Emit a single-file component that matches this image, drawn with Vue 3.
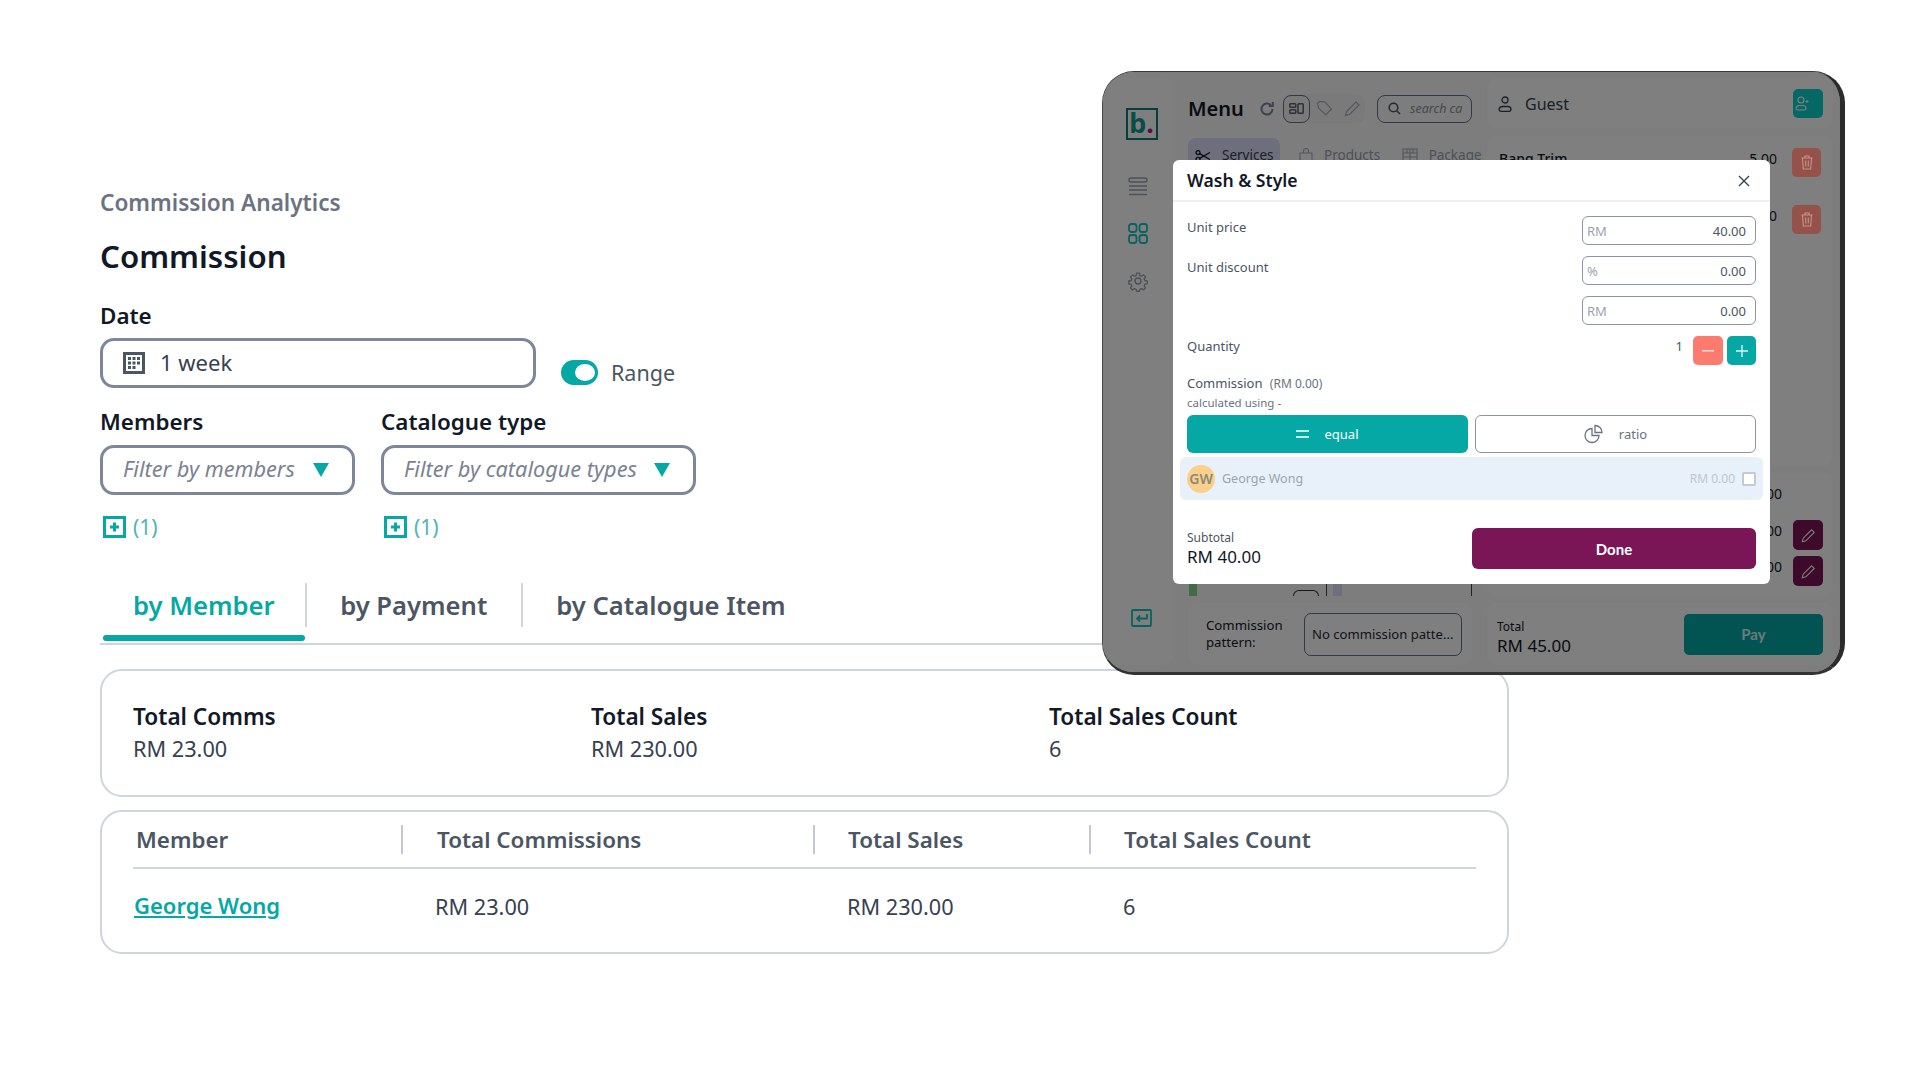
<script setup>
const summary = [
  { label: "Total Comms", value: "RM 23.00" },
  { label: "Total Sales", value: "RM 230.00" },
  { label: "Total Sales Count", value: "6" },
];
const columns = ["Member", "Total Commissions", "Total Sales", "Total Sales Count"];
const tabs = ["by Member", "by Payment", "by Catalogue Item"];
const priceFields = [
  { label: "Unit price", unit: "RM", value: "40.00" },
  { label: "Unit discount", unit: "%", value: "0.00" },
  { label: "", unit: "RM", value: "0.00" },
];
</script>

<template>
  <div class="page">
    <section class="analytics">
      <p class="crumb">Commission Analytics</p>
      <h1 class="title">Commission</h1>

      <label class="field-label date-label">Date</label>
      <div class="date-row">
        <div class="box date-box">
          <svg class="cal" width="22" height="22" viewBox="0 0 22 22">
            <rect x="1.5" y="1.5" width="19" height="19" fill="none" stroke="#4b5563" stroke-width="3" />
            <g fill="#4b5563">
              <rect x="5" y="5" width="3" height="3" /><rect x="9.5" y="5" width="3" height="3" /><rect x="14" y="5" width="3" height="3" />
              <rect x="5" y="9.5" width="3" height="3" /><rect x="9.5" y="9.5" width="3" height="3" /><rect x="14" y="9.5" width="3" height="3" />
              <rect x="5" y="14" width="3" height="3" /><rect x="9.5" y="14" width="3" height="3" />
            </g>
          </svg>
          <span>1 week</span>
        </div>
        <div class="range">
          <span class="toggle"><i></i></span>
          <span>Range</span>
        </div>
      </div>

      <div class="filters">
        <div class="filter members">
          <label class="field-label">Members</label>
          <div class="box select">
            <em>Filter by members</em>
            <span class="caret"></span>
          </div>
          <div class="count">
            <svg width="23" height="22" viewBox="0 0 23 22">
              <rect x="1.5" y="1.5" width="20" height="19" fill="none" stroke="#05a8a4" stroke-width="3" />
              <path d="M11.5 6.5v9M7 11h9" stroke="#05a8a4" stroke-width="3" />
            </svg>
            <span>(1)</span>
          </div>
        </div>
        <div class="filter catalogue">
          <label class="field-label">Catalogue type</label>
          <div class="box select">
            <em>Filter by catalogue types</em>
            <span class="caret"></span>
          </div>
          <div class="count">
            <svg width="23" height="22" viewBox="0 0 23 22">
              <rect x="1.5" y="1.5" width="20" height="19" fill="none" stroke="#05a8a4" stroke-width="3" />
              <path d="M11.5 6.5v9M7 11h9" stroke="#05a8a4" stroke-width="3" />
            </svg>
            <span>(1)</span>
          </div>
        </div>
      </div>

      <nav class="tabs">
        <a v-for="(tab, i) in tabs" :key="tab" class="tab" :class="{ active: i === 0 }">{{ tab }}</a>
      </nav>

      <div class="card summary">
        <div v-for="item in summary" :key="item.label" class="stat">
          <strong>{{ item.label }}</strong>
          <span>{{ item.value }}</span>
        </div>
      </div>

      <div class="card table-card">
        <div class="thead">
          <div v-for="col in columns" :key="col" class="th">{{ col }}</div>
        </div>
        <div class="tbody">
          <a class="member-link">George Wong</a>
          <div>RM 23.00</div>
          <div>RM 230.00</div>
          <div>6</div>
        </div>
      </div>
    </section>

    <!-- tablet window floating over the page -->
    <div class="tablet">
      <div class="app">
        <aside class="rail">
          <div class="logo">b<span>.</span></div>
          <svg class="rail-icon first" width="20" height="20" viewBox="0 0 20 20" fill="none" stroke="#9aa3b0" stroke-width="1.5">
            <rect x="1" y="1" width="18" height="4" rx="2" />
            <path d="M1 9h18M1 13h18M1 17.5h18" />
          </svg>
          <svg class="rail-icon" width="20" height="21" viewBox="0 0 20 21" fill="none" stroke="#12c4ba" stroke-width="1.8">
            <rect x="1" y="1" width="7.5" height="8" rx="2.5" /><rect x="11.5" y="1" width="7.5" height="8" rx="2.5" />
            <rect x="1" y="12" width="7.5" height="8" rx="2.5" /><rect x="11.5" y="12" width="7.5" height="8" rx="2.5" />
          </svg>
          <svg class="rail-icon" width="22" height="22" viewBox="0 0 24 24" fill="none" stroke="#9aa3b0" stroke-width="1.6" stroke-linejoin="round">
            <circle cx="12" cy="12" r="3.2" />
            <path d="M10.3 2.5h3.4l.6 2.9 1.9.8 2.5-1.6 2.4 2.4-1.6 2.5.8 1.9 2.9.6v3.4l-2.9.6-.8 1.9 1.6 2.5-2.4 2.4-2.5-1.6-1.9.8-.6 2.4h-3.4l-.6-2.4-1.9-.8-2.5 1.6-2.4-2.4 1.6-2.5-.8-1.9-2.9-.6v-3.4l2.9-.6.8-1.9-1.6-2.5 2.4-2.4 2.5 1.6 1.9-.8z" transform="translate(1.2 1.2) scale(.9)" />
          </svg>
          <svg class="rail-exit" width="21" height="18" viewBox="0 0 21 18" fill="none" stroke="#12c4ba" stroke-width="1.8">
            <rect x="1" y="1" width="19" height="16" rx="1" />
            <path d="M16 5v4.5H6M9 6.5l-3 3 3 3" />
          </svg>
        </aside>

        <main class="catalog">
          <div class="catalog-main">
            <div class="menu-head">
              <span class="menu-title">Menu</span>
              <svg class="refresh" width="16" height="16" viewBox="0 0 16 16" fill="none" stroke="#7a8494" stroke-width="2">
                <path d="M13.5 8a5.5 5.5 0 1 1-1.6-3.9" />
                <path d="M13.8 1v4h-4" fill="none" />
              </svg>
              <div class="tools">
                <span class="tool active">
                  <svg width="15" height="11" viewBox="0 0 15 11" fill="none" stroke="#5a6372" stroke-width="1.5">
                    <rect x=".8" y=".8" width="6" height="3.5" rx=".8" />
                    <rect x=".8" y="6.7" width="6" height="3.5" rx=".8" />
                    <rect x="9" y=".8" width="5.2" height="9.4" rx=".8" />
                  </svg>
                </span>
                <svg class="tool-tag" width="17" height="17" viewBox="0 0 17 17" fill="none" stroke="#a4abb8" stroke-width="1.2">
                  <path d="M1.5 3.2 3.2 1.5l5.5.4 6.8 7-5.6 6.1-7.4-7z" />
                </svg>
                <svg class="tool-pen" width="17" height="17" viewBox="0 0 17 17" fill="none" stroke="#a4abb8" stroke-width="1.2">
                  <path d="M1.5 15.5l1-4L12 2l3 3-9.5 9.5z" />
                </svg>
              </div>
              <div class="search">
                <svg width="13" height="13" viewBox="0 0 13 13" fill="none" stroke="#4b5563" stroke-width="1.6">
                  <circle cx="5.5" cy="5.5" r="4.3" /><path d="M8.7 8.7 12 12" />
                </svg>
                <em>search ca</em>
              </div>
            </div>
            <div class="cat-tabs">
              <span class="cat-tab on">
                <svg width="16" height="12" viewBox="0 0 16 12" fill="none" stroke="#111827" stroke-width="1.3">
                  <circle cx="3" cy="2.6" r="2" /><circle cx="3" cy="9.4" r="2" />
                  <path d="M4.6 3.6 15 9.5M4.6 8.4 15 2.5" />
                </svg>
                Services
              </span>
              <span class="cat-tab">
                <svg width="14" height="16" viewBox="0 0 14 16" fill="none" stroke="#a4abb8" stroke-width="1.1">
                  <path d="M1 5h12v10.5H1zM4.5 5V3a2.5 2.5 0 0 1 5 0v2" />
                </svg>
                Products
              </span>
              <span class="cat-tab">
                <svg width="16" height="16" viewBox="0 0 16 16" fill="none" stroke="#a4abb8" stroke-width="1.1">
                  <rect x="1" y="1" width="14" height="14" /><path d="M1 5h14M1 9h14M8 1v14M5 1v4M11 1v4" />
                </svg>
                Package
              </span>
            </div>
            <div class="stubs">
              <i class="stub-green"></i>
              <i class="stub-bump"></i>
              <i class="stub-line"></i>
              <i class="stub-block"></i>
              <i class="stub-end"></i>
            </div>
          </div>
          <div class="pattern panel">
            <span class="pattern-label">Commission pattern:</span>
            <span class="pattern-box">No commission patte...</span>
          </div>
        </main>

        <div class="cart">
          <div class="panel guest">
            <svg width="14" height="16" viewBox="0 0 14 16" fill="none" stroke="#374151" stroke-width="1.3">
              <circle cx="7" cy="4" r="3" /><path d="M1 13.5a3.5 3.5 0 0 1 3-3h6a3 3 0 0 1 3 3c0 1-1 1.8-2 1.8H3c-1 0-2-.8-2-1.8z" />
            </svg>
            <span>Guest</span>
            <span class="guest-btn">
              <svg width="14" height="15" viewBox="0 0 14 15" fill="none" stroke="#fff" stroke-width="1.1">
                <circle cx="6" cy="4" r="3" /><path d="M1 12.5a3.5 3.5 0 0 1 3-3h4a3 3 0 0 1 3 3c0 .9-1 1.5-2 1.5H3c-1 0-2-.6-2-1.5zM10.5 5.5h3M12 4v3" />
              </svg>
            </span>
          </div>
          <div class="panel items">
            <div class="item first">
              <span>Bang Trim</span><b>5.00</b>
              <span class="trash">
                <svg width="12" height="15" viewBox="0 0 12 15" fill="none" stroke="#c9928a" stroke-width="1.1">
                  <path d="M.5 3h11M4 3V1h4v2M1.5 3l.8 11h7.4l.8-11M4.7 5.5v6M7.3 5.5v6" />
                </svg>
              </span>
            </div>
            <div class="item">
              <span>Wash</span><b>40.00</b>
              <span class="trash">
                <svg width="12" height="15" viewBox="0 0 12 15" fill="none" stroke="#c9928a" stroke-width="1.1">
                  <path d="M.5 3h11M4 3V1h4v2M1.5 3l.8 11h7.4l.8-11M4.7 5.5v6M7.3 5.5v6" />
                </svg>
              </span>
            </div>
          </div>
          <div class="panel lines">
            <div class="line top">45.00</div>
            <div class="line">
              <span>40.00</span>
              <span class="edit">
                <svg width="15" height="15" viewBox="0 0 17 17" fill="none" stroke="#fff" stroke-width="1.2"><path d="M1.5 15.5l1-4L12 2l3 3-9.5 9.5z" /></svg>
              </span>
            </div>
            <div class="line">
              <span>5.00</span>
              <span class="edit">
                <svg width="15" height="15" viewBox="0 0 17 17" fill="none" stroke="#fff" stroke-width="1.2"><path d="M1.5 15.5l1-4L12 2l3 3-9.5 9.5z" /></svg>
              </span>
            </div>
          </div>
          <div class="panel total">
            <div class="total-text">
              <small>Total</small>
              <span>RM 45.00</span>
            </div>
            <span class="pay">Pay</span>
          </div>
        </div>
      </div>

      <div class="scrim"></div>

      <div class="modal">
        <header class="modal-head">
          <span>Wash &amp; Style</span>
          <svg width="12" height="12" viewBox="0 0 12 12" stroke="#374151" stroke-width="1.4"><path d="M1 1l10 10M11 1 1 11" /></svg>
        </header>
        <div class="modal-body">
          <div class="prices">
            <div v-for="(f, i) in priceFields" :key="i" class="price-row">
              <span>{{ f.label }}</span>
              <div class="money"><i>{{ f.unit }}</i><b>{{ f.value }}</b></div>
            </div>
          </div>
          <div class="qty-row">
            <span>Quantity</span>
            <div class="qty">
              <b>1</b>
              <span class="qty-btn minus"><svg width="12" height="2"><rect width="12" height="1.5" fill="#ffd9d4" /></svg></span>
              <span class="qty-btn plus"><svg width="12" height="12"><path d="M6 0v12M0 6h12" stroke="#d6f5f4" stroke-width="1.4" /></svg></span>
            </div>
          </div>
          <div class="comm-head">Commission <small>(RM 0.00)</small></div>
          <div class="calc">calculated using -</div>
          <div class="modes">
            <div class="mode equal">
              <svg width="13" height="8"><path d="M0 1h13M0 7h13" stroke="#fff" stroke-width="1.4" /></svg>
              <span>equal</span>
            </div>
            <div class="mode ratio">
              <svg width="20" height="20" viewBox="0 0 20 20" fill="none" stroke="#6b7280" stroke-width="1.3">
                <path d="M8 4.5a7 7 0 1 0 7 7H8z" />
                <path d="M11 1.5a7 7 0 0 1 7 7h-7z" />
              </svg>
              <span>ratio</span>
            </div>
          </div>
          <div class="assignee">
            <span class="avatar">GW</span>
            <span class="who">George Wong</span>
            <span class="amount">RM 0.00</span>
            <span class="check"></span>
          </div>
          <div class="modal-foot">
            <div class="sub">
              <small>Subtotal</small>
              <span>RM 40.00</span>
            </div>
            <div class="done">Done</div>
          </div>
        </div>
      </div>
    </div>
  </div>
</template>

<style>
html,
body {
  margin: 0;
  background: #fff;
}
</style>

<style scoped>
* {
  box-sizing: border-box;
}
.page {
  position: relative;
  width: 1920px;
  height: 1080px;
  overflow: hidden;
  background: #fff;
  font-family: "Noto Sans", "Open Sans", sans-serif;
  color: #111827;
}
.analytics {
  width: 1409px;
  margin-left: 100px;
  padding-top: 188px;
}
.crumb {
  margin: 0;
  font-size: 22.6px;
  line-height: 30px;
  font-weight: 600;
  color: #6b7280;
}
.title {
  margin: 18px 0 0;
  font-size: 31.2px;
  line-height: 40px;
  font-weight: 600;
}
.field-label {
  display: block;
  font-size: 22.4px;
  line-height: 28px;
  font-weight: 600;
}
.date-label {
  margin-top: 26px;
}
.date-row {
  display: flex;
  align-items: flex-end;
  gap: 25px;
  margin-top: 8px;
}
.box {
  display: flex;
  align-items: center;
  height: 50px;
  border: 3px solid #7d8799;
  border-radius: 14px;
  background: #fff;
}
.date-box {
  width: 436px;
  padding-left: 20px;
  padding-bottom: 2px;
  font-size: 22px;
  color: #374151;
}
.cal {
  margin-right: 15px;
  margin-top: 2px;
}
.range {
  display: flex;
  align-items: center;
  gap: 13px;
  height: 25px;
  margin-bottom: 3px;
  font-size: 21.5px;
  color: #4b5563;
}
.toggle {
  display: block;
  width: 37px;
  height: 25px;
  padding: 4px 3px 4px 14px;
  border-radius: 13px;
  background: #05a8a4;
}
.toggle i {
  display: block;
  width: 20px;
  height: 17px;
  border-radius: 50%;
  background: #fff;
}
.filters {
  display: flex;
  gap: 26px;
  margin-top: 20px;
}
.select {
  position: relative;
  height: 50px;
  margin-top: 9px;
  padding-left: 20px;
  padding-bottom: 3px;
  font-size: 21.7px;
  color: #7b8290;
}
.members .select {
  width: 255px;
}
.catalogue .select {
  width: 315px;
}
.select em {
  white-space: nowrap;
}
.caret {
  position: absolute;
  right: 23px;
  top: 15px;
  width: 0;
  height: 0;
  border-left: 8px solid transparent;
  border-right: 8px solid transparent;
  border-top: 14px solid #05a8a4;
}
.count {
  display: flex;
  align-items: center;
  gap: 7px;
  height: 24px;
  margin-top: 20px;
  padding-left: 3px;
  font-size: 21px;
  color: #4eb5b2;
}
.tabs {
  display: flex;
  align-items: flex-start;
  height: 62px;
  margin-top: 44px;
  padding-left: 3px;
  border-bottom: 2px solid #d1d5db;
}
.tab {
  position: relative;
  height: 44px;
  padding: 0 33.5px;
  border-left: 2px solid #d1d5db;
  font-size: 25.6px;
  line-height: 46px;
  font-weight: 600;
  color: #4b5563;
}
.tab.active {
  padding: 0 30px;
  border-left: 0;
  color: #05a8a4;
}
.tab.active::after {
  content: "";
  position: absolute;
  left: 0;
  right: 0;
  top: 52px;
  height: 6px;
  border-radius: 3px;
  background: #05a8a4;
}
.card {
  border: 2.5px solid #cfd4de;
  border-radius: 22px;
  background: #fff;
}
.summary {
  display: grid;
  grid-template-columns: 458px 458px 1fr;
  height: 128px;
  margin-top: 24px;
  padding: 29px 31px 0;
}
.stat strong {
  display: block;
  font-size: 22.6px;
  line-height: 33px;
  font-weight: 600;
}
.stat span {
  display: block;
  font-size: 21.7px;
  line-height: 31px;
  color: #374151;
}
.table-card {
  height: 144px;
  margin-top: 13px;
  padding: 0 31px;
}
.thead,
.tbody {
  display: grid;
  grid-template-columns: 268px 412px 276px 1fr;
}
.thead {
  height: 57px;
  padding-top: 13px;
  border-bottom: 2px solid #cfd4de;
}
.th {
  height: 29px;
  padding-left: 33px;
  border-left: 2px solid #c2c7d0;
  font-size: 22.4px;
  line-height: 29px;
  font-weight: 600;
  color: #4b5563;
}
.th:first-child {
  padding-left: 3px;
  border-left: 0;
}
.th:nth-child(2) {
  padding-left: 34px;
}
.tbody {
  padding-top: 22px;
  font-size: 21.7px;
  line-height: 32px;
  color: #374151;
}
.tbody > div {
  padding-left: 34px;
}
.member-link {
  margin-top: -2px;
  padding-left: 1px;
  font-size: 22px;
  font-weight: 600;
  color: #05a8a4;
  text-decoration: underline;
}

/* tablet window */
.tablet {
  position: absolute;
  left: 1102px;
  top: 71px;
  width: 743px;
  height: 604px;
  overflow: hidden;
  border-style: solid;
  border-color: #3a3a3a #2b2b2b #333 #4a4a4a;
  border-width: 1px 5px 3px 1px;
  border-radius: 32px;
  background: #fafafa;
}
.app {
  display: flex;
  gap: 15px;
  height: 100%;
  padding: 6px 7px 7px 7px;
  font-size: 14px;
  color: #111827;
}
.rail {
  display: flex;
  flex-direction: column;
  align-items: center;
  flex: 0 0 63px;
  padding: 29px 0 38px;
  border-radius: 10px;
  background: #fff;
}
.logo {
  width: 32px;
  height: 32px;
  margin-top: 1px;
  border: 2px solid #0f7d76;
  font-size: 27px;
  line-height: 26px;
  font-weight: 700;
  text-align: center;
  color: #0f9a92;
}
.logo span {
  color: #b01c7c;
}
.rail-icon {
  margin-top: 26px;
  margin-right: 7px;
}
.rail-icon.first {
  margin-top: 37px;
}
.rail-exit {
  margin-top: auto;
}
.catalog {
  display: flex;
  flex-direction: column;
  gap: 7px;
  width: 284px;
}
.catalog-main {
  display: flex;
  flex-direction: column;
  flex: 1;
  min-height: 0;
}
.menu-head {
  display: flex;
  align-items: center;
  height: 45px;
  padding-top: 16px;
}
.menu-title {
  width: 71px;
  font-size: 20px;
  font-weight: 600;
}
.refresh {
  margin-right: 8px;
}
.tools {
  display: flex;
  align-items: center;
  width: 82px;
  height: 29px;
  border-radius: 8px;
  background: #f5f5f6;
}
.tool {
  display: flex;
  align-items: center;
  justify-content: center;
  width: 27px;
  height: 28px;
  border: 1.5px solid #64748b;
  border-radius: 8px;
}
.tool-tag {
  margin-left: 6px;
}
.tool-pen {
  margin-left: 11px;
}
.search {
  display: flex;
  align-items: center;
  gap: 9px;
  width: 95px;
  height: 28px;
  margin-left: 12px;
  padding-left: 10px;
  border: 1.5px solid #64748b;
  border-radius: 8px;
  font-size: 12.5px;
  white-space: nowrap;
  overflow: hidden;
  color: #8a93a1;
}
.cat-tabs {
  display: flex;
  height: 30px;
  margin-top: 15px;
}
.cat-tab {
  display: flex;
  align-items: center;
  gap: 11px;
  height: 30px;
  padding: 6px 6px 0;
  margin-right: 9.5px;
  font-size: 13.5px;
  line-height: 1;
  white-space: nowrap;
  color: #9aa3b0;
}
.cat-tab.on {
  width: 93px;
  padding-left: 7px;
  margin-right: 13.5px;
  border-radius: 8px;
  background: #dcdcf8;
  color: #374151;
}
.stubs {
  display: flex;
  align-items: flex-end;
  height: 20px;
  margin-top: auto;
}
.stubs i {
  display: block;
}
.stub-green {
  width: 8px;
  height: 20px;
  margin-left: 1px;
  background: #86d98a;
}
.stub-bump {
  width: 26px;
  height: 6px;
  margin-left: 96px;
  border: 1px solid #333;
  border-bottom: 0;
  border-radius: 8px 8px 0 0;
}
.stub-line {
  width: 1px;
  height: 20px;
  margin-left: 7px;
  background: #444;
}
.stub-block {
  width: 9px;
  height: 20px;
  margin-left: 6px;
  background: #e0e0f5;
}
.stub-end {
  width: 1px;
  height: 20px;
  margin-left: auto;
  background: #444;
}
.panel {
  border-radius: 10px;
  background: #fff;
}
.pattern {
  display: flex;
  align-items: center;
  flex: 0 0 62px;
  padding-left: 18px;
}
.pattern-label {
  width: 98px;
  font-size: 13.2px;
  line-height: 17px;
}
.pattern-box {
  display: flex;
  align-items: center;
  width: 158px;
  height: 43px;
  padding-left: 7px;
  border: 1px solid #64748b;
  border-radius: 7px;
  font-size: 13.1px;
  white-space: nowrap;
  color: #1f2937;
}
.cart {
  display: flex;
  flex-direction: column;
  width: 346px;
}
.guest {
  display: flex;
  align-items: center;
  flex: 0 0 50px;
  padding: 1px 10px 0 11px;
  font-size: 16px;
  color: #374151;
}
.guest svg:first-child {
  margin-right: 13px;
}
.guest-btn {
  display: flex;
  align-items: center;
  justify-content: center;
  width: 30px;
  height: 29px;
  margin-left: auto;
  border-radius: 5px;
  background: #0cd0c8;
}
.items {
  flex: 0 0 330px;
  margin-top: 8px;
  padding: 12px 12px 0;
}
.item {
  display: flex;
  height: 29px;
  margin-bottom: 28px;
  font-size: 14px;
  line-height: 21px;
  font-weight: 500;
}
.item b {
  width: 60px;
  margin-left: auto;
  margin-right: 15px;
  text-align: right;
  font-weight: 400;
}
/* these sit above the scrim: the reference keeps them more saturated */
.trash {
  position: relative;
  z-index: 1;
  display: flex;
  align-items: center;
  justify-content: center;
  width: 29px;
  height: 29px;
  border-radius: 5px;
  background: #94524a;
}
.lines {
  flex: 0 0 123px;
  margin-top: 7px;
  padding: 10px 10px 0;
  font-size: 14px;
  line-height: 22px;
}
.line {
  display: flex;
  justify-content: flex-end;
  height: 36px;
  gap: 11px;
}
.line.top {
  height: 37px;
  padding-right: 41px;
}
.edit {
  display: flex;
  align-items: center;
  justify-content: center;
  width: 30px;
  height: 30px;
  border-radius: 5px;
  background: #7a1556;
}
.total {
  display: flex;
  align-items: center;
  justify-content: space-between;
  flex: 0 0 62px;
  margin-top: 7px;
  padding: 0 10px;
}
.total-text {
  padding-top: 7px;
}
.total-text small {
  display: block;
  font-size: 12px;
  line-height: 15px;
}
.total-text span {
  display: block;
  font-size: 17px;
  line-height: 23px;
}
.pay {
  display: flex;
  align-items: center;
  justify-content: center;
  width: 139px;
  height: 41px;
  border-radius: 5px;
  background: #05a8a4;
  font-family: Lato, sans-serif;
  font-size: 15px;
  font-weight: 700;
  color: #d6f5f4;
}
.scrim {
  position: absolute;
  inset: 0;
  background: rgba(0, 0, 0, 0.5);
}
.modal {
  position: absolute;
  z-index: 2;
  left: 70px;
  top: 88px;
  width: 597px;
  height: 424px;
  border-radius: 6px;
  background: #fff;
  color: #4b5563;
}
.modal-head {
  display: flex;
  align-items: center;
  justify-content: space-between;
  height: 42px;
  padding: 0 20px 0 14px;
  border-bottom: 2px solid #edf0f2;
  font-size: 17.6px;
  font-weight: 600;
  color: #111827;
}
.modal-head svg {
  margin-top: 2px;
}
.modal-body {
  padding: 14px 14px 0;
  font-size: 13px;
}
.prices {
  display: flex;
  flex-direction: column;
  gap: 11px;
}
.price-row {
  display: flex;
  justify-content: space-between;
  height: 29px;
  line-height: 22px;
}
.money {
  display: flex;
  align-items: center;
  justify-content: space-between;
  width: 174px;
  height: 29px;
  padding: 0 9px 0 4px;
  border: 1px solid #8a95a8;
  border-radius: 6px;
}
.money i {
  font-style: normal;
  color: #9ca3af;
}
.money b {
  font-weight: 400;
  color: #4b5563;
}
.qty-row {
  display: flex;
  justify-content: space-between;
  height: 29px;
  margin-top: 11px;
  line-height: 21px;
}
.qty {
  display: flex;
  align-items: flex-start;
  gap: 4px;
}
.qty b {
  margin-right: 6px;
  font-weight: 400;
}
.qty-btn {
  display: flex;
  align-items: center;
  justify-content: center;
  width: 29px;
  height: 29px;
  border-radius: 5px;
}
.minus {
  width: 30px;
  background: #fb7c6e;
}
.plus {
  background: #05a8a4;
}
.comm-head {
  margin-top: 8px;
  line-height: 20px;
}
.comm-head small {
  margin-left: 4px;
  font-size: 12px;
  color: #6b7280;
}
.calc {
  margin-top: 1px;
  font-size: 11.5px;
  line-height: 16px;
  color: #6b7280;
}
.modes {
  display: grid;
  grid-template-columns: 1fr 1fr;
  gap: 7px;
  margin-top: 4px;
}
.mode {
  display: flex;
  align-items: center;
  justify-content: center;
  gap: 15px;
  height: 38px;
  border-radius: 6px;
  font-size: 13px;
}
.equal {
  background: #05a8a4;
  color: #fff;
}
.ratio {
  border: 1px solid #8a95a8;
  color: #6b7280;
}
.assignee {
  display: flex;
  align-items: center;
  height: 43px;
  margin: 4px -7px 0;
  padding: 0 7px;
  border-radius: 6px;
  background: #e8f1fa;
}
.avatar {
  display: flex;
  align-items: center;
  justify-content: center;
  width: 28px;
  height: 28px;
  border-radius: 50%;
  background: #fcd08a;
  font-size: 14px;
  font-weight: 600;
  color: #8a8a7a;
}
.who {
  margin-left: 7px;
  font-size: 12.5px;
  color: #9ca3af;
}
.amount {
  margin-left: auto;
  font-size: 12px;
  color: #c0c4cc;
}
.check {
  width: 14px;
  height: 14px;
  margin-left: 7px;
  border: 2px solid #c5c9d0;
  border-radius: 2px;
  background: #fff;
}
.modal-foot {
  display: flex;
  align-items: center;
  justify-content: space-between;
  margin-top: 28px;
}
.sub small {
  display: block;
  font-size: 12px;
  line-height: 16px;
}
.sub span {
  display: block;
  font-size: 17px;
  line-height: 22px;
  color: #111827;
}
.done {
  display: flex;
  align-items: center;
  justify-content: center;
  width: 284px;
  height: 41px;
  border-radius: 6px;
  background: #7a1556;
  font-family: Lato, sans-serif;
  font-size: 15px;
  font-weight: 700;
  color: #fff;
}
</style>
